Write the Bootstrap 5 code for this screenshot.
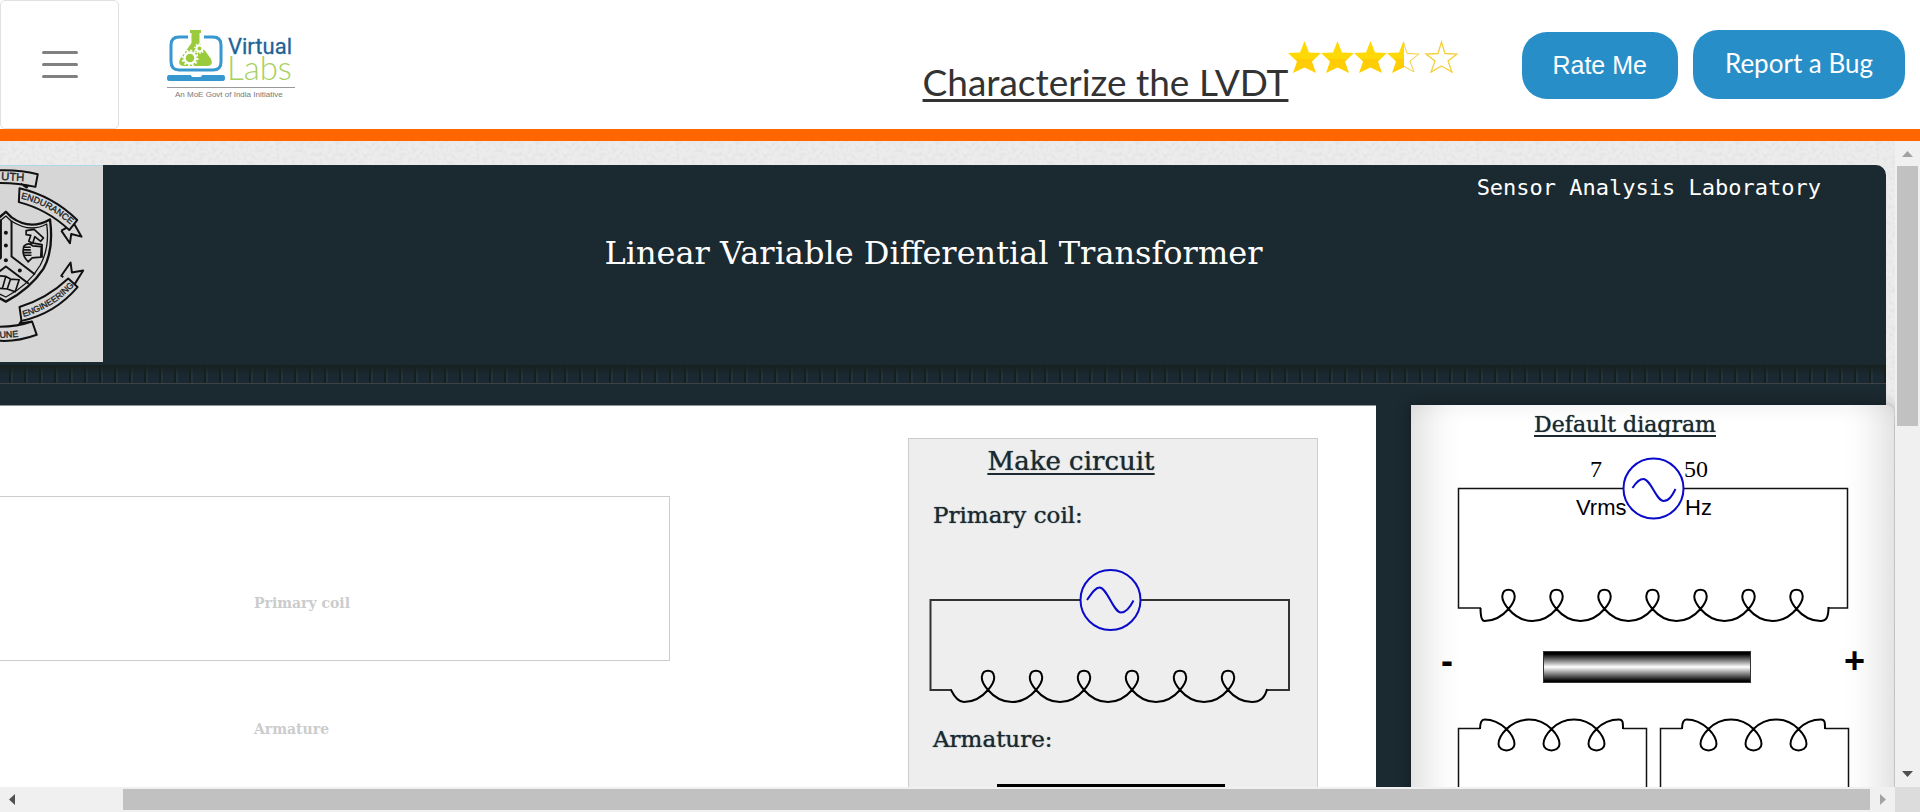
<!DOCTYPE html>
<html lang="en">
<head>
<meta charset="utf-8">
<meta name="viewport" content="width=device-width, initial-scale=1">
<title>Characterize the LVDT - Virtual Labs</title>
<link href="https://cdn.jsdelivr.net/npm/bootstrap@5.3.0/dist/css/bootstrap.min.css" rel="stylesheet">
<style>
  :root { --ink: #1b2930; --brand: #288ec8; --serif: "DejaVu Serif", serif; }
  body { font-family: "Liberation Sans", Arial, sans-serif; overflow: hidden; background: #fff; }
  .site-head { border-bottom: 12px solid #f60; height: 141px; }
  .menu-btn { width: 119px; border: 1px solid #e1e1e1; border-radius: 5px; background: #fff; }
  .exp-title { font-family: Lato, sans-serif; font-size: 37px; line-height: 44px; color: #333; margin: 60px 0 0;
    text-decoration: underline; text-decoration-thickness: 3px; text-underline-offset: 3px; text-decoration-skip-ink: none; }
  .stars { margin: 40px 64px 0 0; }
  .head-actions { padding: 0 15px 30px 0; gap: 15px; }
  .pill { background: var(--brand); color: #fff; border: 0; border-radius: 25px; font-size: 25px; line-height: 30px; }
  .pill-rate { padding: 18px 31px 19px 30px; }
  .pill-bug { padding: 18px 32px 21px; font-family: Lato, sans-serif; font-size: 26px; }
  .paper { padding: 24px 9px 0 0;
    background: #ececec url("data:image/svg+xml,%3Csvg xmlns='http://www.w3.org/2000/svg' width='200' height='200'%3E%3Cfilter id='n' x='0' y='0' width='1' height='1'%3E%3CfeTurbulence type='fractalNoise' baseFrequency='.25' numOctaves='3' stitchTiles='stitch'/%3E%3CfeColorMatrix values='0 0 0 0 .7 0 0 0 0 .7 0 0 0 0 .7 1.2 0 0 0 -.5'/%3E%3C/filter%3E%3Crect width='200' height='200' filter='url(%23n)'/%3E%3C/svg%3E"); }
  .stage { background: var(--ink); border-top-right-radius: 10px; }
  .banner { height: 200px; color: #fff; }
  .crest { width: 103px; height: 197px; background: #d6d6d6; border-top: 1px solid #add8e6; }
  .lab-name { font-family: "DejaVu Sans Mono", monospace; font-size: 22px; line-height: 28px; padding: 9px 65px 0 0; }
  .sim-title { font-family: var(--serif); font-size: 32px; line-height: 40px; padding: 31px 122px 0 0; margin: 0; font-weight: 400; }
  .ribs { height: 19px; border-bottom: 1px solid #3d4244;
    background: linear-gradient(#17201f 0, transparent 60%), repeating-linear-gradient(90deg, #1a2932 0 9px, #14201f 9px 11px, #24343b 11px 13px, #1a2932 13px 15px); }
  .work-row { padding-top: 21px; }
  .bench { background: #fff; border-top: 1px solid #8d9496; margin-right: 35px; }
  .slot { border: 1px solid #ccc; border-left: 0; height: 165px; margin-top: 90px; padding: 94px 0 0 254px; }
  .slot-col { margin-right: 238px; }
  .slot-label { font-family: var(--serif); font-weight: 700; font-size: 14px; line-height: 24px; color: #ccc; margin: 0; }
  .slot-free { padding: 56px 0 0 254px; }
  .maker { width: 410px; margin: 32px 58px 0 0; background: #eee; border: 1px solid #ccc; }
  .soft { font-family: var(--serif); color: var(--ink); font-weight: 400; margin: 0; text-shadow: 0 0 1px #3a4a52; }
  .linked { text-decoration: underline; text-decoration-thickness: 2px; text-underline-offset: 3px; text-decoration-skip-ink: none; }
  .maker h2 { font-size: 26px; line-height: 40px; padding: 2px 84px 2px 0; }
  .maker h3 { font-size: 23px; line-height: 32px; padding-left: 24px; }
  .maker svg { display: block; margin-top: 9px; }
  .maker svg + h3 { padding-top: 3px; }
  .maker h3 + .rod { margin-top: 0; }
  .default-card { width: 483px; margin-right: -8px; background: #fff; border-top-right-radius: 8px;
    box-shadow: inset 50px 0 40px -38px rgba(0,0,0,.15), inset -50px 0 40px -38px rgba(0,0,0,.15), inset 0 20px 20px -16px rgba(0,0,0,.05), 0 0 14px rgba(0,0,0,.35); }
  .default-card h2 { font-size: 22px; line-height: 32px; padding: 4px 55px 9px 0; }
  .bar-track { background: #f0f0f0; }
  .bar-btn { width: 25px; height: 25px; }
  .thumb { background: #c1c1c1; }
  .thumb-v { height: 260px; margin: 0 2px; }
  .thumb-h { margin: 2px 0 2px 98px; }
  .corner { width: 25px; height: 25px; background: #dcdcdc; }
  .wire { fill: none; stroke: #333; stroke-width: 2; }
  .thin { stroke-width: 1.5; stroke: #111; }
  .coil { fill: none; stroke: #000; stroke-width: 2; }
  .source { fill: none; stroke: #0a0acb; stroke-width: 2; }
  svg { flex-shrink: 0; }
</style>
</head>
<body class="vh-100 d-flex flex-column">

<header class="site-head d-flex align-items-stretch flex-shrink-0">
  <button type="button" class="menu-btn d-flex align-items-center justify-content-center p-0" aria-label="Menu">
    <svg width="38" height="28" viewBox="0 0 38 28"><g stroke="#808080" stroke-width="3" stroke-linecap="round"><path d="M2.500 1.500h33M2.500 13.500h33M2.500 25.500h33"/></g></svg>
  </button>
  <a href="#" class="ms-5 mt-4 d-block" aria-label="Virtual Labs">
    <svg width="130" height="80" viewBox="0 0 130 80">
      <g fill="none" stroke="#3698cf" stroke-width="3"><path d="M21 13H12Q4 13 4 21V37Q4 46 12 46H46Q54 46 54 38V21Q54 13 46 13H37"/></g>
      <path d="M2 51H24q0 2 3 2h5q3 0 3-2H56q2 0 2 3t-2 3H2q-2 0-2-3t2-3z" fill="#3698cf"/>
      <path d="M23 6h11v3h-1.500v10L44 35q3 7-4 7H17q-7 0-4-7l11.500-16V9H23z" fill="#99cb3c"/>
      <circle cx="23" cy="34" r="5.500" fill="none" stroke="#fff" stroke-width="2.500"/>
      <circle cx="23" cy="34" r="7.500" fill="none" stroke="#fff" stroke-width="2" stroke-dasharray="2 1.930"/>
      <circle cx="32.500" cy="24.500" r="3" fill="none" stroke="#fff" stroke-width="2"/>
      <circle cx="32.500" cy="24.500" r="4.600" fill="none" stroke="#fff" stroke-width="1.500" stroke-dasharray="1.500 1.390"/>
      <text x="61" y="30" font-family="Roboto, sans-serif" font-size="22" font-weight="400" fill="#1f6497" stroke="#1f6497" stroke-width=".3">Virtual</text>
      <text x="60" y="56" font-family="Lato, sans-serif" font-size="33" font-weight="300" fill="#a7d05f">Labs</text>
      <path d="M0 63.500H128" stroke="#999"/>
      <text x="8" y="73" font-family="Liberation Sans, Arial, sans-serif" font-size="8" fill="#777">An MoE Govt of India Initiative</text>
    </svg>
  </a>
  <div class="flex-grow-1"></div>
  <h1 class="exp-title fw-normal text-nowrap">Characterize the LVDT</h1>
  <svg class="stars" width="170" height="34" viewBox="0 0 170 34" role="img" aria-label="Rated 3.5 out of 5">
    <defs>
      <path id="star" d="M16.500 1l4.500 11.500 12 .5-9 8.500 4 11.500-11.500-5.500L5 33l4-11.500L0 13l12-.5z"/>
      <clipPath id="lefthalf"><path d="M0 0h17v34H0z"/></clipPath>
      <linearGradient id="gold" x2="0" y2="1"><stop offset=".55" stop-color="#ffd905"/><stop offset=".56" stop-color="#ffcb05"/><stop offset="1" stop-color="#ffd000"/></linearGradient>
    </defs>
    <g fill="url(#gold)"><use href="#star"/><use href="#star" x="33"/><use href="#star" x="66"/></g>
    <g transform="translate(99)"><path d="M16.500 2l3.500 11.500 12 .5-9 7 4 11-10.500-6z" fill="#fff" stroke="#f5cf3a"/><use href="#star" clip-path="url(#lefthalf)" fill="url(#gold)"/></g>
    <path d="M153.500 2l3.500 11.500 12 .5-9 7 4 11-10.500-6-10.500 6 4-11-9-7 12-.5z" fill="#fff" stroke="#f5cf3a" stroke-width="1.300"/>
  </svg>
  <div class="head-actions d-flex align-items-end">
    <button type="button" class="pill pill-rate text-nowrap">Rate Me</button>
    <button type="button" class="pill pill-bug text-nowrap">Report a Bug</button>
  </div>
</header>

<div class="d-flex flex-grow-1 overflow-hidden">
  <main class="paper flex-grow-1 overflow-hidden d-flex">
    <div class="stage flex-grow-1 d-flex flex-column">
      <div class="banner d-flex flex-shrink-0">
        <svg class="crest" viewBox="0 105 309 591" role="img" aria-label="College crest">
          <g fill="none" stroke="#111" stroke-width="6" stroke-linejoin="round">
            <path d="M-5 118Q60 116 113 130L106 168Q50 155-5 156M62 158l18 12 4-8"/>
            <path d="M58 172Q160 196 232 268L208 298Q140 235 56 214zM184 300l26 38 4-28 31 8-22-38M184 300l14-8"/>
            <path d="M58 530Q140 505 205 444L233 470Q165 550 64 572zM190 440l-6-4 28-40 4 30 34-6-26 42"/>
            <path d="M64 572l-6 8 38-6 14 40Q50 636-5 632M96 574Q50 590-5 590"/>
            <path d="M-5 262L17 243 34 260Q90 300 150 266Q162 360 130 415Q90 475 17 514L-5 502" stroke-width="7"/>
            <path d="M-5 274L17 256 32 270Q90 308 140 280Q150 350 120 405Q85 465 17 500L-5 490" stroke-width="4"/>
            <path d="M2 266V382L-5 388M34 270V378L105 432M-5 425L17 408 86 460"/>
            <path d="M78 300l24-4 28 26-8 10-18-14-6 20-12-6 6-18-14-2zM90 336l36 6M72 346q14-12 26 0l26 2-2 32-26 2-12 12-8-10q-12-18-4-38zM68 350h24M68 358h24M70 366h24M72 374h22M126 340v42" stroke-width="5"/>
            <path d="M-3 436l20 2 14 8 26 2-12 36-24-8-24-2M16 440l-10 36M31 446l-10 30" stroke-width="5"/>
          </g>
          <g fill="#111"><circle cx="17" cy="306" r="6"/><circle cx="17" cy="345" r="6"/><circle cx="17" cy="389" r="6"/><circle cx="59" cy="420" r="6"/></g>
          <path id="arcA" d="M62 203Q150 223 222 292" fill="none"/><path id="arcB" d="M70 560Q160 535 226 462" fill="none"/>
          <g font-family="Liberation Sans, Arial, sans-serif" fill="#222" stroke="#222">
            <text x="72" y="151" font-size="34" text-anchor="end" transform="rotate(3 72 151)">UTH</text>
            <text font-size="27"><textPath href="#arcA">ENDURANCE</textPath></text>
            <text font-size="26"><textPath href="#arcB">ENGINEERING</textPath></text>
            <text x="55" y="620" font-size="27" text-anchor="end" transform="rotate(-4 55 620)">UNE</text>
          </g>
        </svg>
        <div class="flex-grow-1">
          <div class="lab-name text-end">Sensor Analysis Laboratory</div>
          <h2 class="sim-title text-center">Linear Variable Differential Transformer</h2>
        </div>
      </div>
      <div class="ribs flex-shrink-0"></div>
      <div class="work-row d-flex flex-grow-1">
        <section class="bench flex-grow-1 d-flex">
          <div class="slot-col flex-grow-1">
            <div class="slot"><p class="slot-label">Primary coil</p></div>
            <p class="slot-label slot-free">Armature</p>
          </div>
          <div class="maker">
            <h2 class="soft text-center"><span class="linked">Make circuit</span></h2>
            <h3 class="soft pt-3">Primary coil:</h3>
            <svg width="408" height="180" viewBox="0 0 408 180">
              <path class="wire" d="M171.500 60H21.500V150H43M231.500 60H380V150H358"/>
              <circle class="source" cx="201.500" cy="60" r="30"/>
              <path class="source" d="M178 60c6-9 9-12.500 12.500-12.500c7.500 0 14 25 21.500 25c5 0 9-5 12.500-12"/>
              <path class="coil" d="M42 150c4 8 9 12 13 12
                c10 0 18-5 24-12c5-6 7-10 6-14c-1-7-11-7-12 0c-1 4 1 8 6 14c6 7 14 12 24 12
                c10 0 18-5 24-12c5-6 7-10 6-14c-1-7-11-7-12 0c-1 4 1 8 6 14c6 7 14 12 24 12
                c10 0 18-5 24-12c5-6 7-10 6-14c-1-7-11-7-12 0c-1 4 1 8 6 14c6 7 14 12 24 12
                c10 0 18-5 24-12c5-6 7-10 6-14c-1-7-11-7-12 0c-1 4 1 8 6 14c6 7 14 12 24 12
                c10 0 18-5 24-12c5-6 7-10 6-14c-1-7-11-7-12 0c-1 4 1 8 6 14c6 7 14 12 24 12
                c10 0 18-5 24-12c5-6 7-10 6-14c-1-7-11-7-12 0c-1 4 1 8 6 14c6 7 14 12 24 12
                c8 0 13-4 15-13"/>
            </svg>
            <h3 class="soft">Armature:</h3>
            <svg class="rod" width="408" height="80" viewBox="0 0 408 80">
              <rect x="89" y="30" width="226" height="30" fill="url(#steel)" stroke="#000" stroke-width="2"/>
            </svg>
          </div>
        </section>
        <section class="default-card flex-shrink-0">
          <h2 class="soft text-center"><span class="linked">Default diagram</span></h2>
          <svg class="d-block" width="483" height="400" viewBox="0 0 483 400">
            <defs><linearGradient id="steel" x2="0" y2="1"><stop offset=".08" stop-color="#000"/><stop offset=".5" stop-color="#fff"/><stop offset=".95" stop-color="#000"/></linearGradient></defs>
            <path class="wire thin" d="M212.500 38.500H47.500V158H70M272.500 38.500H436.500V158H417"/>
            <circle class="source" cx="242.500" cy="38.500" r="30"/>
            <path class="source" d="M221.500 38c5-8 8-9 11-9c7 0 13 22 20 22c5 0 8-4 12-12"/>
            <text x="179" y="27" font-family="Liberation Serif, serif" font-size="24">7</text>
            <text x="273" y="27" font-family="Liberation Serif, serif" font-size="24">50</text>
            <text x="165" y="65" font-size="22">Vrms</text>
            <text x="274" y="65" font-size="22">Hz</text>
            <path class="coil" d="M69.500 158c0 8 1 13 4 13
              c10 0 18-5 24-12c5-6 7-10 6-14c-1-7-11-7-12 0c-1 4 1 8 6 14c6 7 14 12 24 12
              c10 0 18-5 24-12c5-6 7-10 6-14c-1-7-11-7-12 0c-1 4 1 8 6 14c6 7 14 12 24 12
              c10 0 18-5 24-12c5-6 7-10 6-14c-1-7-11-7-12 0c-1 4 1 8 6 14c6 7 14 12 24 12
              c10 0 18-5 24-12c5-6 7-10 6-14c-1-7-11-7-12 0c-1 4 1 8 6 14c6 7 14 12 24 12
              c10 0 18-5 24-12c5-6 7-10 6-14c-1-7-11-7-12 0c-1 4 1 8 6 14c6 7 14 12 24 12
              c10 0 18-5 24-12c5-6 7-10 6-14c-1-7-11-7-12 0c-1 4 1 8 6 14c6 7 14 12 24 12
              c10 0 18-5 24-12c5-6 7-10 6-14c-1-7-11-7-12 0c-1 4 1 8 6 14c6 7 14 12 24 12
              c6 0 8-4 8-14"/>
            <rect x="132.500" y="201.500" width="207" height="31" fill="url(#steel)" stroke="#333"/>
            <text x="30" y="223" font-size="36" font-weight="700">-</text>
            <text x="433" y="223" font-size="36" font-weight="700">+</text>
            <g id="secondary">
              <path class="wire thin" d="M47.500 400V278.500H69M212 278.500H235.500V400"/>
              <path class="coil" d="M69 279c0-6 1-9.500 4.500-9.500
                c9 0 15 3 22 9.500c5 5 8 11 8 15c0 8.500-16 8.500-16 0c0-4 3-10 8-15c6-6 13-9.500 22.500-9.500
                c9.500 0 16.500 3.500 22.500 9.500c5 5 8 11 8 15c0 8.500-16 8.500-16 0c0-4 3-10 8-15c6-6 13-9.500 22.500-9.500
                c9.500 0 16.500 3.500 22.500 9.500c5 5 8 11 8 15c0 8.500-16 8.500-16 0c0-4 3-10 8-15c6-6 13-9.500 22.500-9.500
                c4 0 4 3 4 9.500"/>
            </g>
            <use href="#secondary" x="202"/>
          </svg>
        </section>
      </div>
    </div>
  </main>
  <div class="bar-track d-flex flex-column">
    <svg class="bar-btn" viewBox="0 0 25 25"><path d="M7 16h11l-5.500-6z" fill="#a3a3a3"/></svg>
    <div class="thumb thumb-v"></div>
    <svg class="bar-btn mt-auto" viewBox="0 0 25 25"><path d="M7 9h11l-5.500 6z" fill="#505050"/></svg>
  </div>
</div>
<div class="d-flex flex-shrink-0">
  <div class="bar-track d-flex flex-grow-1">
    <svg class="bar-btn" viewBox="0 0 25 25"><path d="M15 7v11l-6-5.500z" fill="#505050"/></svg>
    <div class="thumb thumb-h flex-grow-1"></div>
    <svg class="bar-btn" viewBox="0 0 25 25"><path d="M10 7v11l6-5.500z" fill="#a3a3a3"/></svg>
  </div>
  <div class="corner"></div>
</div>
<script src="https://cdn.jsdelivr.net/npm/bootstrap@5.3.0/dist/js/bootstrap.bundle.min.js"></script>
</body>
</html>
